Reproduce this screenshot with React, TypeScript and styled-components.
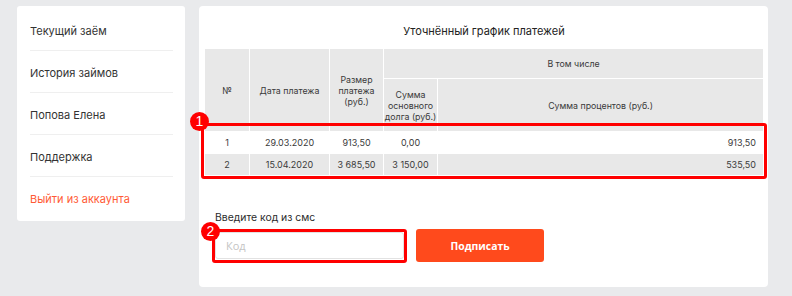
import React from 'react';
import styled, { createGlobalStyle } from 'styled-components';

const COLORS = {
  page: '#e9eaec',
  white: '#ffffff',
  text: '#333333',
  cell: '#e8e8e8',
  divider: '#efefef',
  accent: '#ff4a1c',
  logout: '#ff5a36',
  marker: '#ff0000',
};

const GlobalStyle = createGlobalStyle`
  body {
    margin: 0;
    background: ${COLORS.page};
    font-family: Inter, 'Noto Sans', sans-serif;
    color: ${COLORS.text};
  }
`;

const Page = styled.div`
  display: flex;
  align-items: flex-start;
  gap: 14px;
  padding: 6px 0 0 17px;
`;

const Sidebar = styled.nav`
  width: 168px;
  box-sizing: border-box;
  background: ${COLORS.white};
  border-radius: 3px;
  padding: 3px 12px 3px 13px;
  display: flex;
  flex-direction: column;
`;

const NavItem = styled.a<{ $danger?: boolean }>`
  display: flex;
  align-items: center;
  height: 38px;
  padding-top: 3px;
  font-size: 11px;
  color: ${(p) => (p.$danger ? COLORS.logout : COLORS.text)};
  text-decoration: none;
  border-bottom: ${(p) => (p.$danger ? 'none' : `1px solid ${COLORS.divider}`)};
`;

const Main = styled.section`
  width: 569px;
  height: 281px;
  box-sizing: border-box;
  background: ${COLORS.white};
  border-radius: 4px;
  padding: 16px 4px 0 5px;
`;

const Title = styled.h2`
  margin: 0 0 8px;
  font-size: 11px;
  line-height: 18px;
  font-weight: 400;
  text-align: center;
  color: #222;
`;

const TableWrap = styled.div`
  position: relative;
`;

const Table = styled.table`
  width: 560px;
  border-collapse: collapse;
  table-layout: fixed;
  font-size: 9px;
  color: #3a3a3a;
`;

const Th = styled.th<{ $h?: number }>`
  background: ${COLORS.cell};
  border: 1px solid ${COLORS.white};
  font-weight: 400;
  font-size: 8.8px;
  line-height: 11px;
  padding: 0;
  height: ${(p) => (p.$h ? `${p.$h}px` : 'auto')};
  text-align: center;
  vertical-align: middle;
`;

const Row = styled.tr<{ $shaded?: boolean }>`
  background: ${(p) => (p.$shaded ? COLORS.cell : COLORS.white)};
`;

const Td = styled.td<{ $right?: boolean }>`
  border: 1px solid ${COLORS.white};
  height: 21px;
  padding: 0 7px;
  text-align: ${(p) => (p.$right ? 'right' : 'center')};
  vertical-align: middle;
  white-space: nowrap;
`;

const Highlight = styled.div<{ $top: number; $left: number; $width: number; $height: number }>`
  position: absolute;
  top: ${(p) => p.$top}px;
  left: ${(p) => p.$left}px;
  width: ${(p) => p.$width}px;
  height: ${(p) => p.$height}px;
  box-sizing: border-box;
  border: 3.5px solid ${COLORS.marker};
  border-radius: 3px;
  pointer-events: none;
`;

const Badge = styled.span<{ $top: number; $left: number }>`
  position: absolute;
  top: ${(p) => p.$top}px;
  left: ${(p) => p.$left}px;
  width: 19px;
  height: 19px;
  border-radius: 50%;
  background: ${COLORS.marker};
  color: ${COLORS.white};
  font-family: 'Liberation Sans', Arial, sans-serif;
  font-size: 14px;
  line-height: 19px;
  text-align: center;
`;

const SignForm = styled.form`
  margin: 35px 0 0 11px;
`;

const Label = styled.label`
  display: block;
  font-size: 10.4px;
  line-height: 14px;
  color: #2b2b2b;
  margin-bottom: 4px;
`;

const Controls = styled.div`
  display: flex;
  align-items: center;
  gap: 12px;
`;

const InputWrap = styled.div`
  position: relative;
  width: 189px;
  height: 27px;
`;

const CodeInput = styled.input`
  width: 100%;
  height: 100%;
  box-sizing: border-box;
  border: 1px solid #e2e2e2;
  border-radius: 3px;
  padding: 0 10px;
  font-family: 'Open Sans', sans-serif;
  font-size: 11px;
  color: ${COLORS.text};
  &::placeholder {
    color: #c4c4c4;
  }
`;

const SubmitButton = styled.button`
  width: 128px;
  height: 33px;
  border: none;
  border-radius: 3px;
  background: ${COLORS.accent};
  color: ${COLORS.white};
  font-family: 'Open Sans', sans-serif;
  font-weight: 700;
  font-size: 10.4px;
  cursor: pointer;
`;

const payments = [
  { n: 1, date: '29.03.2020', amount: '913,50', principal: '0,00', interest: '913,50' },
  { n: 2, date: '15.04.2020', amount: '3 685,50', principal: '3 150,00', interest: '535,50' },
];

const menu = ['Текущий заём', 'История займов', 'Попова Елена', 'Поддержка'];

export default function App() {
  return (
    <>
      <GlobalStyle />
      <Page>
        <Sidebar>
          {menu.map((item) => (
            <NavItem key={item} href="#">
              {item}
            </NavItem>
          ))}
          <NavItem href="#" $danger>
            Выйти из аккаунта
          </NavItem>
        </Sidebar>

        <Main>
          <Title>Уточнённый график платежей</Title>
          <TableWrap>
            <Table>
              <colgroup>
                <col style={{ width: 45 }} />
                <col style={{ width: 80 }} />
                <col style={{ width: 54 }} />
                <col style={{ width: 54 }} />
                <col />
              </colgroup>
              <thead>
                <tr>
                  <Th rowSpan={2}>№</Th>
                  <Th rowSpan={2}>Дата платежа</Th>
                  <Th rowSpan={2}>
                    Размер
                    <br />
                    платежа
                    <br />
                    (руб.)
                  </Th>
                  <Th colSpan={2} $h={29}>
                    В том числе
                  </Th>
                </tr>
                <tr>
                  <Th $h={52}>
                    Сумма
                    <br />
                    основного
                    <br />
                    долга (руб.)
                  </Th>
                  <Th $h={52}>Сумма процентов (руб.)</Th>
                </tr>
              </thead>
              <tbody>
                {payments.map((p, i) => (
                  <Row key={p.n} $shaded={i % 2 === 1}>
                    <Td>{p.n}</Td>
                    <Td>{p.date}</Td>
                    <Td>{p.amount}</Td>
                    <Td>{p.principal}</Td>
                    <Td $right>{p.interest}</Td>
                  </Row>
                ))}
              </tbody>
            </Table>
            <Highlight $top={75} $left={-3} $width={566} $height={56} />
            <Badge $top={64} $left={-14}>1</Badge>
          </TableWrap>

          <SignForm onSubmit={(e) => e.preventDefault()}>
            <Label htmlFor="sms-code">Введите код из смс</Label>
            <Controls>
              <InputWrap>
                <CodeInput id="sms-code" placeholder="Код" />
                <Highlight $top={-3} $left={-3} $width={195} $height={34} />
                <Badge $top={-10} $left={-14}>2</Badge>
              </InputWrap>
              <SubmitButton type="submit">Подписать</SubmitButton>
            </Controls>
          </SignForm>
        </Main>
      </Page>
    </>
  );
}
